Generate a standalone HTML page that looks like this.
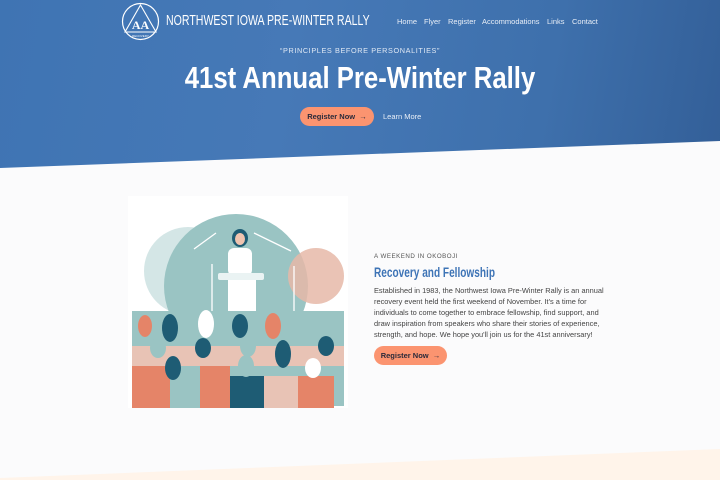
<!DOCTYPE html>
<html><head><meta charset="utf-8"><style>
*{margin:0;padding:0;box-sizing:border-box}
body{width:720px;height:480px;overflow:hidden;background:#fbfbfc;font-family:"Liberation Sans",sans-serif;position:relative}
.hero{position:absolute;left:0;top:0;width:720px;height:170px;background:linear-gradient(100deg,#3f74b3 0%,#4679b7 40%,#3e70ac 75%,#335f98 100%);clip-path:polygon(0 0,720px 0,720px 141px,0 168px)}
.cream{position:absolute;left:0;top:440px;width:720px;height:40px;background:#fff4ea;clip-path:polygon(0 38px,720px 9px,720px 40px,0 40px)}
.t{position:absolute;color:#fff;white-space:nowrap}
.brand{left:166px;top:13px;font-size:14.5px;transform:scaleX(.73);transform-origin:left}
.nav{top:17px;font-size:7.5px;color:#e8eef7}
.quote{left:0;width:720px;text-align:center;top:46px;font-size:7.3px;letter-spacing:.6px;color:#dfe8f4}
.h1{left:0;width:720px;text-align:center;top:60px;font-size:31px;font-weight:bold;transform:scaleX(.83)}
.btn{position:absolute;background:#fb9470;color:#2a2a3a;border-radius:10px;font-size:7.5px;font-weight:bold;text-align:center}
.small{position:absolute;left:374px;top:253px;font-size:6.2px;letter-spacing:.5px;color:#555}
.h2{position:absolute;left:374px;top:264px;font-size:14px;font-weight:bold;color:#3e74b6;transform:scaleX(.72);transform-origin:left;white-space:nowrap}
.p{position:absolute;left:374px;top:285px;font-size:7.4px;line-height:11.1px;color:#444;white-space:nowrap}
</style></head><body>
<div class="hero"></div>
<div class="cream"></div>
<svg style="position:absolute;left:120px;top:2px" width="42" height="40" viewBox="0 0 42 40">
<circle cx="20.5" cy="19.5" r="18" fill="none" stroke="#fff" stroke-width="1.2"/>
<path d="M20.5 3 L36 30 L5 30 Z" fill="none" stroke="#fff" stroke-width="1.1"/>
<text x="20.5" y="27" text-anchor="middle" font-family="Liberation Serif,serif" font-size="12" fill="#fff" font-weight="bold">AA</text>
<text x="20.5" y="35" text-anchor="middle" font-size="3" fill="#fff">RECOVERY</text>
</svg>
<div class="t brand">NORTHWEST IOWA PRE-WINTER RALLY</div>
<div class="t nav" style="left:397px">Home</div>
<div class="t nav" style="left:424px">Flyer</div>
<div class="t nav" style="left:448px">Register</div>
<div class="t nav" style="left:482px">Accommodations</div>
<div class="t nav" style="left:547px">Links</div>
<div class="t nav" style="left:572px">Contact</div>
<div class="t quote">“PRINCIPLES BEFORE PERSONALITIES”</div>
<div class="t h1">41st Annual Pre-Winter Rally</div>
<div class="btn" style="left:300px;top:107px;width:74px;height:19px;line-height:19px">Register Now &nbsp;→</div>
<div class="t" style="left:383px;top:112px;font-size:7.5px;color:#e8eef7">Learn More</div>

<svg style="position:absolute;left:128px;top:196px" width="220" height="212" viewBox="0 0 220 212">
<rect width="220" height="212" fill="#fff"/>
<circle cx="60" cy="75" r="44" fill="#d4e6e6"/>
<circle cx="108" cy="90" r="72" fill="#9ac4c3"/>
<circle cx="188" cy="80" r="28" fill="#e6b9a8" opacity=".85"/>
<path d="M66 53 L88 37 M126 37 L163 55 M84 68 V140 M166 70 V140" stroke="#fff" stroke-width="1.3"/>
<ellipse cx="112" cy="42" rx="8" ry="9" fill="#1e5c74"/>
<rect x="100" y="52" width="24" height="28" rx="6" fill="#fff"/>
<ellipse cx="112" cy="43" rx="5" ry="6" fill="#f0c4b0"/>
<rect x="90" y="77" width="46" height="7" rx="2" fill="#eaf3f3"/>
<rect x="100" y="84" width="28" height="52" fill="#fff"/>
<g>
<rect x="4" y="115" width="212" height="95" fill="#9ac4c3"/>
<ellipse cx="17" cy="130" rx="7" ry="11" fill="#e58468"/>
<ellipse cx="42" cy="132" rx="8" ry="14" fill="#1e5c74"/>
<ellipse cx="78" cy="128" rx="8" ry="14" fill="#fff"/>
<ellipse cx="112" cy="130" rx="8" ry="12" fill="#1e5c74"/>
<ellipse cx="145" cy="130" rx="8" ry="13" fill="#e58468"/>
<ellipse cx="182" cy="130" rx="8" ry="13" fill="#9ac4c3"/>
<rect x="4" y="150" width="212" height="20" fill="#e8c3b5"/>
<ellipse cx="30" cy="152" rx="8" ry="10" fill="#9ac4c3"/>
<ellipse cx="75" cy="152" rx="8" ry="10" fill="#1e5c74"/>
<ellipse cx="120" cy="150" rx="8" ry="11" fill="#9ac4c3"/>
<ellipse cx="155" cy="158" rx="8" ry="14" fill="#1e5c74"/>
<ellipse cx="198" cy="150" rx="8" ry="10" fill="#1e5c74"/>
<rect x="4" y="170" width="38" height="42" fill="#e58468"/>
<rect x="42" y="170" width="30" height="42" fill="#9ac4c3"/>
<rect x="72" y="170" width="30" height="42" fill="#e58468"/>
<rect x="102" y="180" width="34" height="32" fill="#1e5c74"/>
<rect x="136" y="180" width="34" height="32" fill="#e8c3b5"/>
<rect x="170" y="180" width="36" height="32" fill="#e58468"/>
<ellipse cx="45" cy="172" rx="8" ry="12" fill="#1e5c74"/>
<ellipse cx="118" cy="170" rx="8" ry="11" fill="#9ac4c3"/>
<ellipse cx="185" cy="172" rx="8" ry="10" fill="#fff"/>
</g>
</svg>

<div class="small">A WEEKEND IN OKOBOJI</div>
<div class="h2">Recovery and Fellowship</div>
<div class="p">Established in 1983, the Northwest Iowa Pre-Winter Rally is an annual<br>recovery event held the first weekend of November. It's a time for<br>individuals to come together to embrace fellowship, find support, and<br>draw inspiration from speakers who share their stories of experience,<br>strength, and hope. We hope you'll join us for the 41st anniversary!</div>
<div class="btn" style="left:374px;top:346px;width:73px;height:19px;line-height:19px">Register Now &nbsp;→</div>
</body></html>
